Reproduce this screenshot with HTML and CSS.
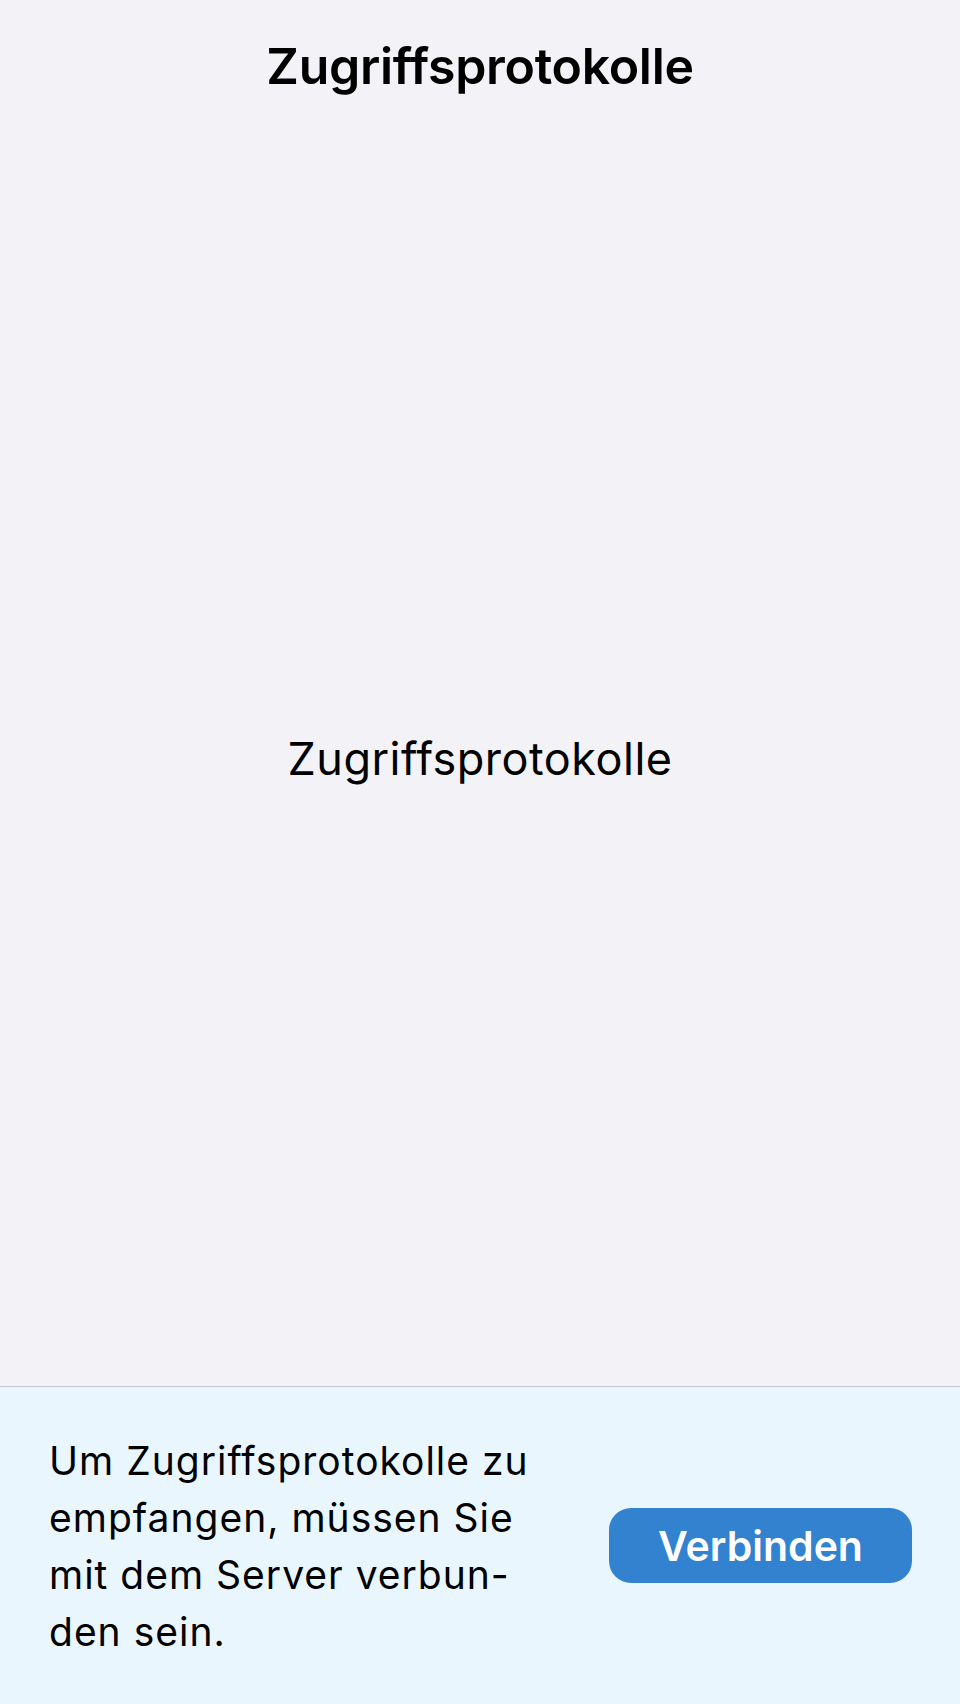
FILE: index.html
```html
<!DOCTYPE html>
<html lang="de">
<head>
<meta charset="utf-8">
<title>Zugriffsprotokolle</title>
<link rel="stylesheet" href="styles.css">
</head>
<body>
<div class="screen">
  <header class="navbar">
    <h1 class="nav-title">Zugriffsprotokolle</h1>
  </header>
  <main class="content">
    <p class="placeholder">Zugriffsprotokolle</p>
  </main>
  <footer class="connect-bar">
    <p class="connect-text">Um Zugriffsprotokolle zu<br>empfangen, müssen Sie<br>mit dem Server verbun-<br>den sein.</p>
    <button class="connect-button" type="button">Verbinden</button>
  </footer>
</div>
</body>
</html>
```

FILE: styles.css
```css
* {
  box-sizing: border-box;
}

html, body {
  margin: 0;
  padding: 0;
}

body {
  width: 960px;
  height: 1704px;
  background: #f2f2f7;
  font-family: Inter, "Noto Sans", "Liberation Sans", sans-serif;
  color: #000;
}

.screen {
  display: flex;
  flex-direction: column;
  height: 1704px;
}

.navbar {
  height: 132px;
  display: flex;
  align-items: center;
  justify-content: center;
  flex: none;
}

.nav-title {
  margin: 0;
  font-size: 50px;
  font-weight: 600;
  line-height: 62px;
  letter-spacing: -0.3px;
}

.content {
  flex: 1;
  display: flex;
  align-items: center;
  justify-content: center;
}

.placeholder {
  margin: 0;
  font-size: 45px;
  font-weight: 400;
  line-height: 56px;
  letter-spacing: 0.5px;
}

.connect-bar {
  flex: none;
  height: 318px;
  border-top: 1px solid #c4c6cb;
  background: #eaf6fe;
  display: flex;
  align-items: center;
  justify-content: space-between;
  padding: 0 48px 0 49px;
}

.connect-text {
  margin: 0;
  font-size: 39px;
  line-height: 57px;
  font-weight: 400;
  letter-spacing: 1px;
}

.connect-button {
  width: 303px;
  height: 75px;
  border: none;
  border-radius: 22px;
  background: #3282d0;
  color: #fff;
  font-family: inherit;
  font-size: 41px;
  font-weight: 600;
  padding: 0;
}
```
